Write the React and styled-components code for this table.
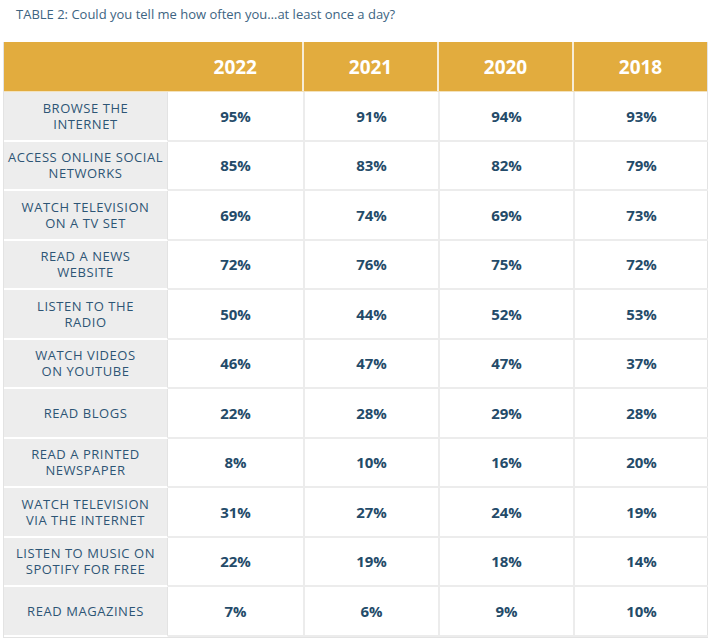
import React from 'react';
import styled, { createGlobalStyle } from 'styled-components';

const GlobalStyle = createGlobalStyle`
  body {
    margin: 0;
    background: #ffffff;
    font-family: "Open Sans", "Liberation Sans", sans-serif;
  }
`;

const Page = styled.div`
  width: 712px;
  padding: 0 0 0 3px;
  box-sizing: border-box;
`;

const Title = styled.div`
  padding: 5px 0 0 13px;
  height: 42px;
  box-sizing: border-box;
  font-size: 13px;
  color: #3d6482;
`;

const Table = styled.div`
  width: 705px;
  border: 1px solid #e3e3e3;
  border-top: none;
  box-sizing: border-box;
`;

const HeadRow = styled.div`
  display: grid;
  grid-template-columns: 298px repeat(3, 135px);
  height: 50px;
  background: #e2ac3e;
  border-bottom: 1px solid #f3e2bd;
  box-sizing: border-box;
`;

const Year = styled.div`
  display: flex;
  align-items: center;
  justify-content: ${p => (p.$first ? 'flex-end' : 'center')};
  padding-right: ${p => (p.$first ? '45px' : '0')};
  border-left: ${p => (p.$first ? 'none' : '2px solid #f7ecd5')};
  color: #ffffff;
  font-size: 19px;
  font-weight: 700;
`;

const Row = styled.div`
  display: grid;
  grid-template-columns: 164px repeat(4, 135px);
  height: 49.5px;
`;

const Label = styled.div`
  display: flex;
  align-items: center;
  justify-content: center;
  padding: 0 2px;
  background: #ededed;
  color: #2d5575;
  font-size: 13px;
  font-weight: 500;
  letter-spacing: 0.55px;
  line-height: 16px;
  text-align: center;
  text-transform: uppercase;
  border-bottom: 2px solid #ffffff;
  border-right: 1px solid #e3e3e3;
`;

const Value = styled.div`
  display: flex;
  align-items: center;
  justify-content: center;
  color: #244b69;
  font-size: 15px;
  font-weight: 700;
  border-left: ${p => (p.$first ? 'none' : '2px solid #ececec')};
  border-bottom: 2px solid #ececec;
`;

const years = ['2022', '2021', '2020', '2018'];

const rows = [
  ['Browse the', 'internet', '95%', '91%', '94%', '93%'],
  ['Access online social', 'networks', '85%', '83%', '82%', '79%'],
  ['Watch television', 'on a TV set', '69%', '74%', '69%', '73%'],
  ['Read a news', 'website', '72%', '76%', '75%', '72%'],
  ['Listen to the', 'radio', '50%', '44%', '52%', '53%'],
  ['Watch videos', 'on YouTube', '46%', '47%', '47%', '37%'],
  ['Read blogs', null, '22%', '28%', '29%', '28%'],
  ['Read a printed', 'newspaper', '8%', '10%', '16%', '20%'],
  ['Watch television', 'via the internet', '31%', '27%', '24%', '19%'],
  ['Listen to music on', 'Spotify for free', '22%', '19%', '18%', '14%'],
  ['Read magazines', null, '7%', '6%', '9%', '10%'],
];

export default function App() {
  return (
    <Page>
      <GlobalStyle />
      <Title>TABLE 2: Could you tell me how often you…at least once a day?</Title>
      <Table>
        <HeadRow>
          {years.map((y, i) => (
            <Year key={y} $first={i === 0}>{y}</Year>
          ))}
        </HeadRow>
        {rows.map(([a, b, ...vals]) => (
          <Row key={a}>
            <Label>
              <span>
                {a}
                {b && <br />}
                {b}
              </span>
            </Label>
            {vals.map((v, i) => (
              <Value key={i} $first={i === 0}>{v}</Value>
            ))}
          </Row>
        ))}
      </Table>
    </Page>
  );
}
